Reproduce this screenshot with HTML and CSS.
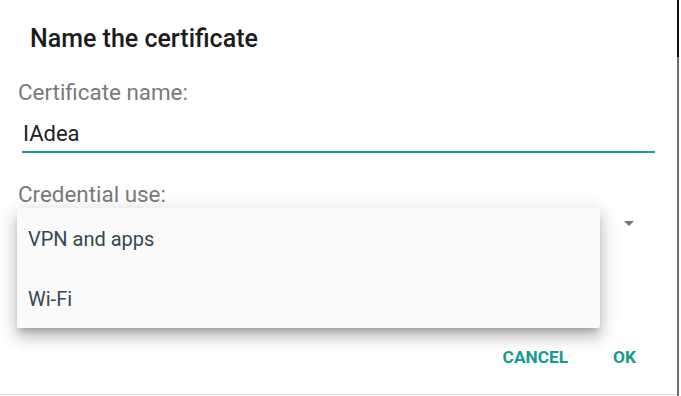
FILE: index.html
```html
<!DOCTYPE html>
<html>
<head>
<meta charset="utf-8">
<link rel="stylesheet" href="styles.css">
</head>
<body>
<div class="screen">
  <div class="dialog">
    <h1 class="title">Name the certificate</h1>
    <div class="label label-name">Certificate name:</div>
    <div class="input">IAdea</div>
    <div class="label label-use">Credential use:</div>
    <div class="spinner">
      <svg class="arrow" width="10" height="5" viewBox="0 0 10 5"><path d="M0 0h10L5 5z" fill="#757575"/></svg>
    </div>
    <div class="actions">
      <span class="btn">CANCEL</span>
      <span class="btn">OK</span>
    </div>
    <ul class="menu">
      <li class="item">VPN and apps</li>
      <li class="item">Wi-Fi</li>
    </ul>
  </div>
  <div class="edge"></div>
</div>
</body>
</html>
```

FILE: styles.css
```css
html, body {
  margin: 0;
  padding: 0;
  background: #ffffff;
}
body {
  font-family: Roboto, "Noto Sans", sans-serif;
  width: 681px;
  height: 396px;
  overflow: hidden;
}
.screen {
  display: flex;
  width: 681px;
  height: 396px;
}
.dialog {
  position: relative;
  width: 677px;
  height: 394px;
  border-bottom: 1px solid #dedede;
  display: flex;
  flex-direction: column;
}
.edge {
  width: 2px;
  height: 396px;
  background: linear-gradient(#111111 0, #111111 57px, #6b6b6b 57px);
}
.title {
  margin: 26px 0 0 30px;
  font-size: 25px;
  line-height: 25px;
  font-weight: 500;
  color: #1c1c1c;
}
.label {
  margin-left: 18px;
  font-size: 22.4px;
  line-height: 22px;
  color: #7a7a7a;
}
.label-name {
  margin-top: 29.5px;
}
.input {
  margin: 20px 22px 0 22px;
  padding: 0 0 6.5px 1px;
  font-size: 22px;
  line-height: 22px;
  color: #212121;
  border-bottom: 2px solid #1a9e90;
}
.label-use {
  margin-top: 29.5px;
}
.spinner {
  display: flex;
  justify-content: flex-end;
  padding: 16.5px 43px 0 0;
  height: 20px;
}
.arrow {
  display: block;
}
.actions {
  display: flex;
  justify-content: flex-end;
  gap: 45px;
  margin: 108px 41px 0 0;
}
.btn {
  font-size: 17.3px;
  line-height: 17px;
  font-weight: 700;
  color: #139b8b;
}
.menu {
  position: absolute;
  left: 17px;
  top: 208px;
  width: 583px;
  height: 120px;
  margin: 0;
  padding: 0;
  list-style: none;
  background: #fafafa;
  border-radius: 2px;
  box-shadow: 0 6px 6px -3px rgba(0,0,0,.2), 0 10px 14px 1px rgba(0,0,0,.14), 0 4px 20px 3px rgba(0,0,0,.12);
}
.item {
  height: 60px;
  box-sizing: border-box;
  padding: 21px 0 0 11px;
  font-size: 20px;
  line-height: 20px;
  color: #37474f;
}
```
